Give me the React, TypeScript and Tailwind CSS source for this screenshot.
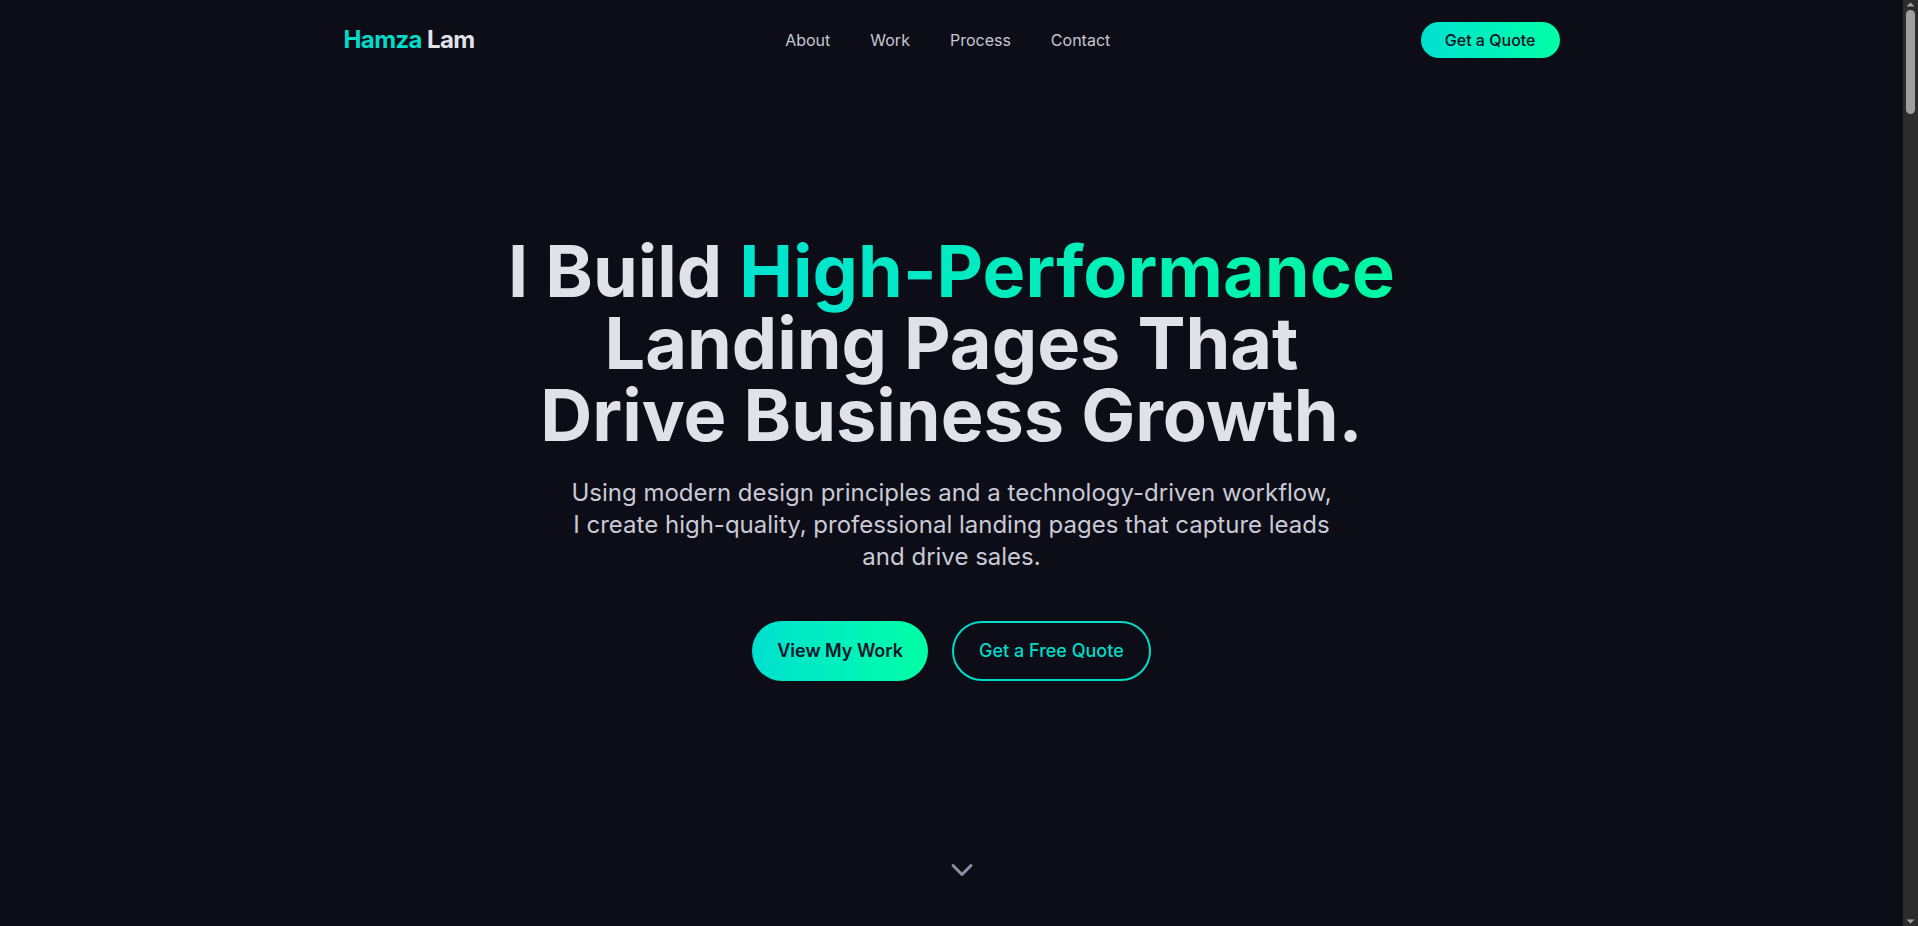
import React from "react";

function ChevronDown() {
  return (
    <svg width="36" height="36" viewBox="0 0 24 24" fill="none" stroke="currentColor" strokeWidth="2" strokeLinecap="round" strokeLinejoin="round">
      <path d="m6 9 6 6 6-6" />
    </svg>
  );
}

function FakeScrollbar() {
  return (
    <div className="flex h-screen w-[15px] shrink-0 flex-col items-center bg-[#2c2c2c]">
      <svg width="15" height="10" viewBox="0 0 15 10" className="shrink-0">
        <path d="M3.5 6.5 L7.5 2.5 L11.5 6.5 Z" fill="#a3a3a3" />
      </svg>
      <div className="h-[104px] w-[9px] shrink-0 rounded-full bg-[#9f9f9f]" />
      <div className="flex-1" />
      <svg width="15" height="10" viewBox="0 0 15 10" className="shrink-0">
        <path d="M3.5 3.5 L7.5 7.5 L11.5 3.5 Z" fill="#a3a3a3" />
      </svg>
    </div>
  );
}

export default function App() {
  return (
    <div className="flex h-screen overflow-hidden bg-[#0c0d17] font-['Inter','Noto_Sans',sans-serif] text-[#e1e1ea]">
      <div className="relative h-screen flex-1 overflow-y-auto">
        <header className="absolute top-0 left-0 right-0 z-20">
          <nav className="mx-auto flex h-20 max-w-7xl items-center justify-between px-8">
            <a href="#" className="text-2xl font-bold tracking-tight">
              <span className="text-[#00dcc9]">Hamza</span> <span className="text-[#e1e1ea]">Lam</span>
            </a>
            <ul className="flex items-center gap-10 text-base text-[#c6c7d2]">
              <li><a href="#about">About</a></li>
              <li><a href="#work">Work</a></li>
              <li><a href="#process">Process</a></li>
              <li><a href="#contact">Contact</a></li>
            </ul>
            <a href="#contact" className="rounded-full bg-linear-to-r from-[#00e0d0] to-[#00ffa4] px-6 py-1.5 text-base font-medium text-[#10131f]">
              Get a Quote
            </a>
          </nav>
        </header>

        <section className="relative flex h-screen flex-col items-center justify-center pb-[11px] text-center">
          <h1 className="text-7xl leading-none font-bold tracking-normal text-[#e1e1ea]">
            I Build{" "}
            <span className="bg-linear-to-r from-[#00e3d0] to-[#00f8a2] bg-clip-text text-transparent">High-Performance</span>
            <br />
            Landing Pages That
            <br />
            Drive Business Growth.
          </h1>
          <p className="mt-[26px] max-w-3xl text-2xl text-[#c9cad6]">
            Using modern design principles and a technology-driven workflow, I create high-quality, professional landing pages that capture leads and drive sales.
          </p>
          <div className="mt-12 flex items-center gap-6">
            <a href="#work" className="rounded-full bg-linear-to-r from-[#00e0d0] to-[#00ffa4] px-[25px] py-4 text-lg font-semibold text-[#10162a]">
              View My Work
            </a>
            <a href="#contact" className="rounded-full border-2 border-[#00dcc9] px-[25px] py-[14px] text-lg font-medium text-[#00dcc9]">
              Get a Free Quote
            </a>
          </div>
          <div className="absolute bottom-[38px] left-1/2 ml-[10px] -translate-x-1/2 text-[#8b8fa0]">
            <ChevronDown />
          </div>
        </section>

        <section id="work" className="mx-auto flex min-h-[1800px] max-w-7xl flex-col px-8 py-24">
          <h2 className="text-5xl font-bold">Selected Work</h2>
        </section>
        <section id="process" className="mx-auto flex min-h-[1800px] max-w-7xl flex-col px-8 py-24">
          <h2 className="text-5xl font-bold">My Process</h2>
        </section>
        <section id="about" className="mx-auto flex min-h-[1800px] max-w-7xl flex-col px-8 py-24">
          <h2 className="text-5xl font-bold">About</h2>
        </section>
        <section id="contact" className="mx-auto flex min-h-[1700px] max-w-7xl flex-col px-8 py-24">
          <h2 className="text-5xl font-bold">Contact</h2>
        </section>
      </div>
      <FakeScrollbar />
    </div>
  );
}
